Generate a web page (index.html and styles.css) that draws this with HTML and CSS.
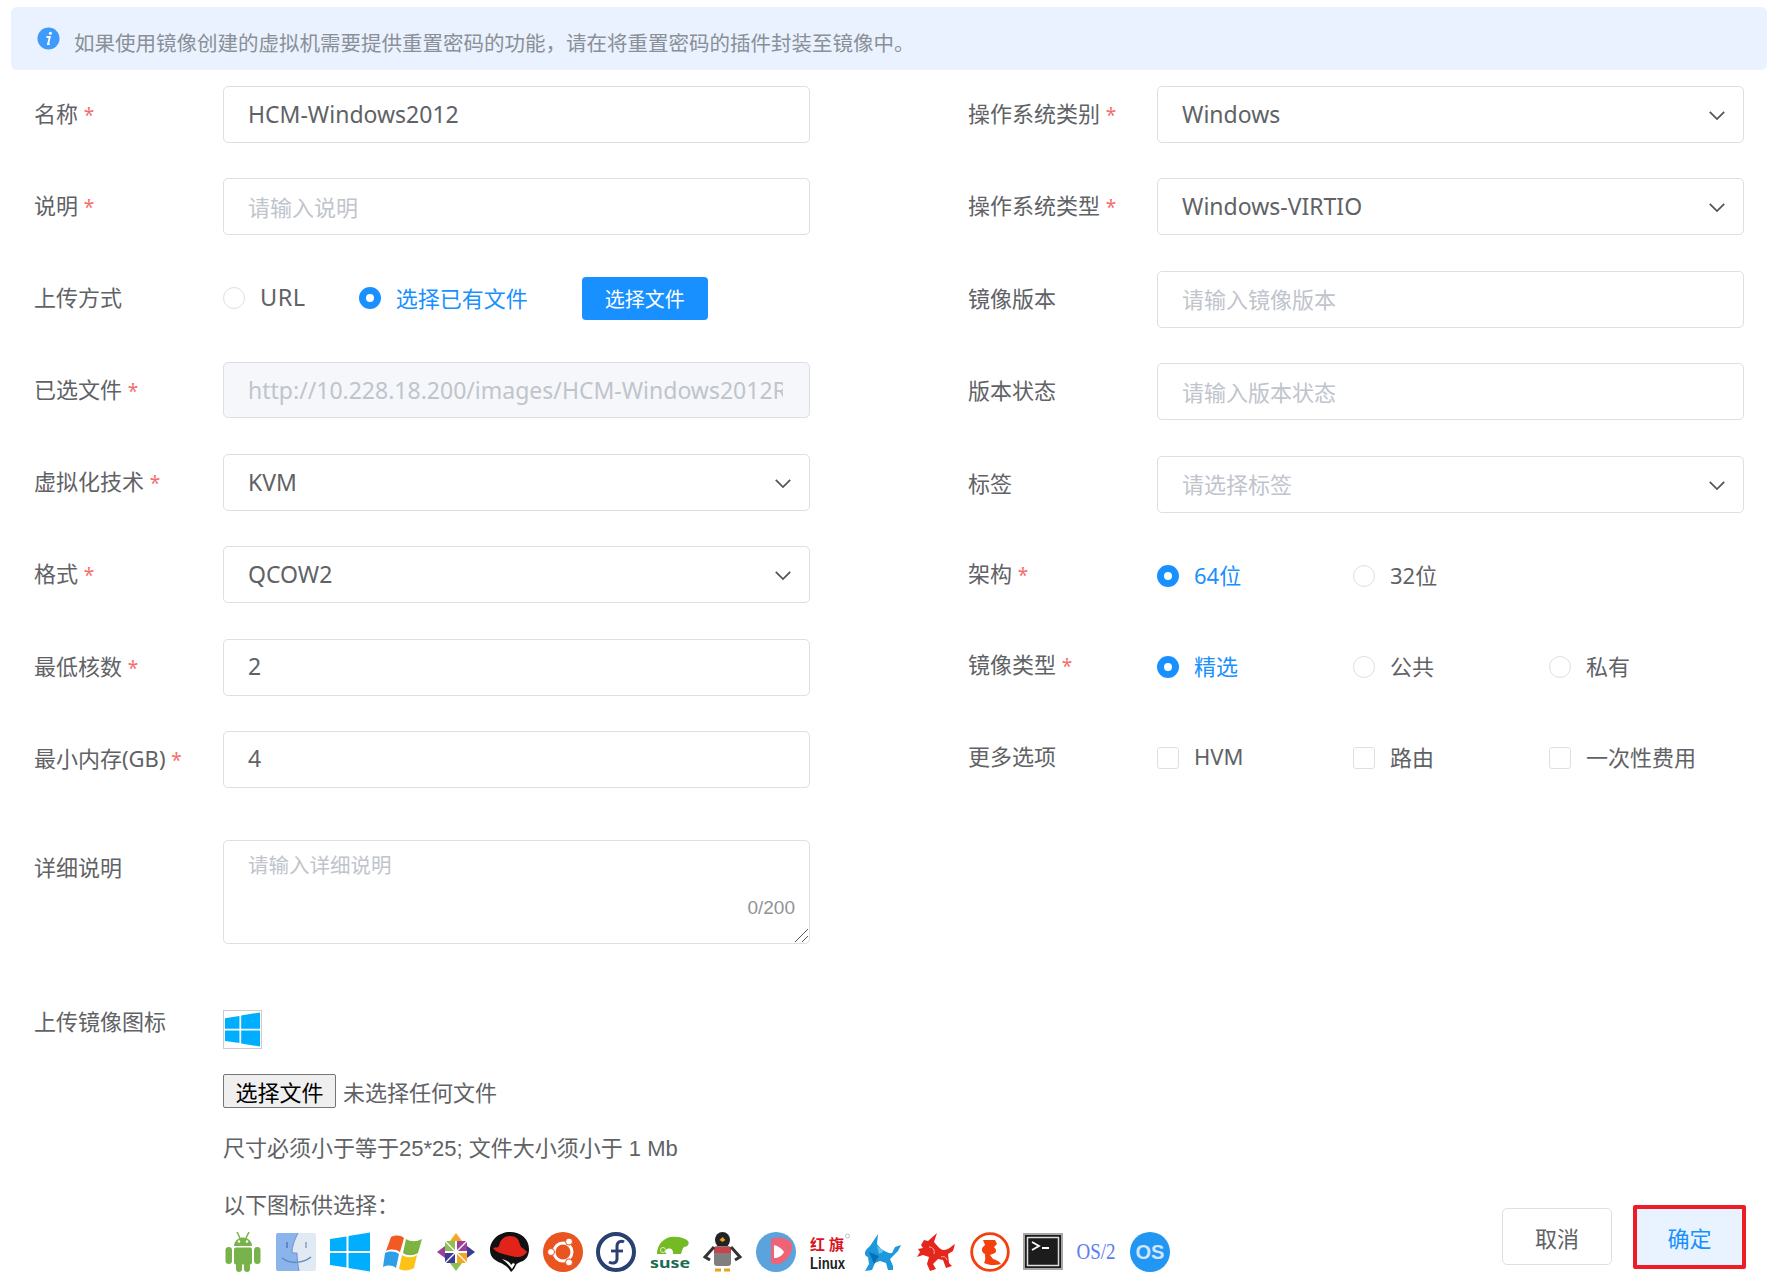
FILE: index.html
```html
<!DOCTYPE html>
<html lang="zh">
<head>
<meta charset="utf-8">
<title>镜像</title>
<link rel="stylesheet" href="styles.css">
</head>
<body>
<div class="alert">
  <svg class="alert-icon" viewBox="0 0 24 24"><circle cx="12" cy="12" r="11.500" fill="#3f9bfb"/><circle cx="14" cy="6.600" r="1.600" fill="#fff"/><path d="M9.800 10.400h3.600l-1.900 7.400h1.800" fill="none" stroke="#fff" stroke-width="1.900"/></svg>
  <span>如果使用镜像创建的虚拟机需要提供重置密码的功能，请在将重置密码的插件封装至镜像中。</span>
</div>
<form class="form">
  <div class="columns">
    <div class="col col-left">
      <div class="row"><label class="lab">名称 <i>*</i></label><div class="box">HCM-Windows2012</div></div>
      <div class="row"><label class="lab">说明 <i>*</i></label><div class="box ph">请输入说明</div></div>
      <div class="row"><label class="lab">上传方式</label>
        <div class="upload-way">
          <span class="radio"></span><span class="opt url">URL</span>
          <span class="radio on"></span><span class="opt blue">选择已有文件</span>
          <span class="btn-blue">选择文件</span>
        </div>
      </div>
      <div class="row"><label class="lab">已选文件 <i>*</i></label><div class="box disabled"><span class="clip">http://10.228.18.200/images/HCM-Windows2012R2.qcow2</span></div></div>
      <div class="row"><label class="lab">虚拟化技术 <i>*</i></label><div class="box select">KVM<svg class="chev" viewBox="0 0 20 12"><path d="M2 2l8 8 8-8" fill="none" stroke="#555" stroke-width="2"/></svg></div></div>
      <div class="row"><label class="lab">格式 <i>*</i></label><div class="box select">QCOW2<svg class="chev" viewBox="0 0 20 12"><path d="M2 2l8 8 8-8" fill="none" stroke="#555" stroke-width="2"/></svg></div></div>
      <div class="row"><label class="lab">最低核数 <i>*</i></label><div class="box">2</div></div>
      <div class="row"><label class="lab">最小内存(GB) <i>*</i></label><div class="box">4</div></div>
      <div class="row row-area"><label class="lab">详细说明</label>
        <div class="area"><span class="area-ph">请输入详细说明</span><span class="count">0/200</span>
          <svg class="grip" viewBox="0 0 14 14"><path d="M1 14L14 1M8 14l6-6" stroke="#555" stroke-width="1" fill="none"/></svg>
        </div>
      </div>
    </div>
    <div class="col col-right">
      <div class="row"><label class="lab">操作系统类别 <i>*</i></label><div class="box select">Windows<svg class="chev" viewBox="0 0 20 12"><path d="M2 2l8 8 8-8" fill="none" stroke="#555" stroke-width="2"/></svg></div></div>
      <div class="row"><label class="lab">操作系统类型 <i>*</i></label><div class="box select">Windows-VIRTIO<svg class="chev" viewBox="0 0 20 12"><path d="M2 2l8 8 8-8" fill="none" stroke="#555" stroke-width="2"/></svg></div></div>
      <div class="row"><label class="lab">镜像版本</label><div class="box ph">请输入镜像版本</div></div>
      <div class="row"><label class="lab">版本状态</label><div class="box ph">请输入版本状态</div></div>
      <div class="row row-last"><label class="lab">标签</label><div class="box select ph">请选择标签<svg class="chev" viewBox="0 0 20 12"><path d="M2 2l8 8 8-8" fill="none" stroke="#555" stroke-width="2"/></svg></div></div>
      <div class="row row-opt"><label class="lab">架构 <i>*</i></label>
        <div class="opts"><div class="item"><span class="radio on"></span><span class="opt blue">64位</span></div><div class="item"><span class="radio"></span><span class="opt">32位</span></div></div></div>
      <div class="row row-opt"><label class="lab">镜像类型 <i>*</i></label>
        <div class="opts"><div class="item"><span class="radio on"></span><span class="opt blue">精选</span></div><div class="item"><span class="radio"></span><span class="opt">公共</span></div><div class="item"><span class="radio"></span><span class="opt">私有</span></div></div></div>
      <div class="row row-opt"><label class="lab">更多选项</label>
        <div class="opts"><div class="item"><span class="check"></span><span class="opt">HVM</span></div><div class="item"><span class="check"></span><span class="opt">路由</span></div><div class="item"><span class="check"></span><span class="opt">一次性费用</span></div></div></div>
    </div>
  </div>
  <div class="up-row">
    <label class="lab">上传镜像图标</label>
    <div class="up-body">
      <div class="preview"><svg viewBox="0 0 40 40"><use href="#win"/></svg></div>
      <div class="file"><span class="file-btn">选择文件</span><span class="file-name">未选择任何文件</span></div>
      <p class="hint">尺寸必须小于等于25*25; 文件大小须小于 1 Mb</p>
      <p class="hint hint2">以下图标供选择：</p>
    </div>
  </div>
  <div class="bottom">
    <div class="icons">
      <svg class="ic" viewBox="0 0 40 40"><g fill="#78b24a"><path d="M11 14a9 8.500 0 0 1 18 0z"/><rect x="11" y="15.500" width="18" height="17" rx="2"/><rect x="2.500" y="15" width="6.500" height="17" rx="3.200"/><rect x="31" y="15" width="6.500" height="17" rx="3.200"/><rect x="13" y="30" width="6" height="10" rx="3"/><rect x="21" y="30" width="6" height="10" rx="3"/></g><path d="M14 0l3 6M26 0l-3 6" stroke="#78b24a" stroke-width="1.500"/><circle cx="16" cy="9.500" r="1.200" fill="#fff"/><circle cx="24" cy="9.500" r="1.200" fill="#fff"/></svg>
      <svg class="ic" viewBox="0 0 40 40"><rect x="0" y="1" width="40" height="38" rx="2" fill="#e1e9f2"/><path d="M2 1h20c-4 8-6 14-6 20h5c0 6 1 12 2 18H2a2 2 0 0 1-2-2V3a2 2 0 0 1 2-2z" fill="#8bb4ec"/><rect x="10" y="10" width="2" height="6" fill="#5f86c4"/><rect x="29" y="10" width="2" height="6" fill="#9db2c9"/><path d="M6 26c8 6 20 6 29-1" stroke="#5f86c4" stroke-width="1.500" fill="none"/><path d="M22 1c-4 8-6 14-6 20h5c0 6 1 12 2 18" stroke="#6f94cc" stroke-width="1" fill="none"/></svg>
      <svg class="ic" viewBox="0 0 40 40"><use href="#win"/></svg>
      <svg class="ic" viewBox="0 0 40 40"><path d="M8 5c5-2 9-2 13 1l-4 14c-5-3-9-3-14-1z" fill="#f25a23"/><path d="M23 7c5 3 10 3 16 0l-4 14c-5 3-11 3-15 0z" fill="#7cb342"/><path d="M2 21c5-2 9-2 14 1l-3 14c-4-3-8-3-13-1z" fill="#2e9fe6"/><path d="M19 23c5 3 10 3 15 0l-3 13c-5 3-11 3-15 1z" fill="#fbc318"/></svg>
      <svg class="ic" viewBox="0 0 40 40"><path d="M20 1l6 8h-12z" fill="#f5a623"/><path d="M39 20l-8 6V14z" fill="#3c3a94"/><path d="M20 39l-6-8h12z" fill="#8cc152"/><path d="M1 20l8-6v12z" fill="#9b3f9d"/><rect x="9" y="9" width="10" height="10" fill="#8cc152"/><rect x="21" y="9" width="10" height="10" fill="#9b3f9d"/><rect x="9" y="21" width="10" height="10" fill="#3c3a94"/><rect x="21" y="21" width="10" height="10" fill="#f5a623"/><path d="M9 9l22 22M31 9L9 31" stroke="#fff" stroke-width="1.300"/></svg>
      <svg class="ic" viewBox="0 0 40 40"><path d="M20 0c11 0 19 7 19 17 0 7-3 10-6 12-3 1-6 2-7 4-1 2-2 5-5 7-2-4-6-7-10-9C5 29 0 25 0 18 0 8 9 0 20 0z" fill="#111"/><path d="M3 16c3-1 5 0 6-2 1-6 5-10 11-10 6 0 9 3 10 9 1 3 5 4 7 7-3 5-9 6-16 4-7-2-15-3-18-8z" fill="#e2231a"/><path d="M12 27c4 1 8 3 9 6l2-2 2 1-3 5c-3-4-6-7-10-10z" fill="#fff"/></svg>
      <svg class="ic" viewBox="0 0 40 40"><circle cx="20" cy="20" r="20" fill="#e95420"/><circle cx="20" cy="20" r="9" fill="none" stroke="#fff" stroke-width="3"/><circle cx="8" cy="20" r="3.500" fill="#fff" stroke="#e95420"/><circle cx="26" cy="9.600" r="3.500" fill="#fff" stroke="#e95420"/><circle cx="26" cy="30.400" r="3.500" fill="#fff" stroke="#e95420"/></svg>
      <svg class="ic" viewBox="0 0 40 40"><circle cx="20" cy="20" r="18" fill="#fff" stroke="#294172" stroke-width="4"/><path d="M28 10c-3-2-7 0-7 4v13c0 4-4 5-8 3" fill="none" stroke="#294172" stroke-width="3"/><path d="M15 19h12" stroke="#294172" stroke-width="2.800"/></svg>
      <svg class="ic" viewBox="0 0 40 40"><path d="M7 22c0-11 9-19 20-17 4 0 9 2 11 4 2 3-1 6-4 6-2 2-2 4-3 7H23c1-5-4-7-7-4-2 2 0 4 2 4z" fill="#73ba25"/><circle cx="13" cy="18" r="2.500" fill="none" stroke="#d9eec5"/><text class="suse" x="0" y="36" textLength="40" lengthAdjust="spacingAndGlyphs">suse</text></svg>
      <svg class="ic" viewBox="0 0 40 40"><ellipse cx="19.500" cy="8" rx="7.500" ry="8" fill="#222"/><path d="M19.500 5l3 3-3 2-3-2z" fill="#e8a21b"/><rect x="11" y="14" width="17" height="20" rx="3" fill="#7f7f7f"/><rect x="11" y="15" width="17" height="6" fill="#c8434a"/><path d="M11 15L2 25l5 3M28 15l9 10-5 3" stroke="#333" stroke-width="3" fill="none"/><path d="M12 38h6M21 38h6" stroke="#e8a21b" stroke-width="3"/></svg>
      <svg class="ic" viewBox="0 0 40 40"><circle cx="20" cy="20" r="20" fill="#5aa3dc"/><path d="M15 7c9-3 18-1 21 5 1 9-5 18-14 20-2 0-5 0-7-1z" fill="#ef6376"/><path d="M18 13c5 1 9 5 10 7-2 4-6 6-10 6z" fill="#fff"/></svg>
      <svg class="ic" viewBox="0 0 40 40"><text class="hq" x="0" y="18">红旗</text><circle cx="37.500" cy="4" r="2" fill="none" stroke="#999" stroke-width=".6"/><text class="lin" x="0" y="37" textLength="35" lengthAdjust="spacingAndGlyphs">Linux</text></svg>
      <svg class="ic" viewBox="0 0 40 40"><path d="M2 21c0-3 3-5 5-7l8-12-1 10c1 2 3 3 4 5 3 1 7 5 11 4l3-6 6-2-3 6-3 3-5 5 3 7 0 4-5 0-2-7-6-2-5 2-3 7-7 1 4-7-1-7c-2-1-3-1-3-4z" fill="#1d98dc"/><path d="M6 20l10 4-5 8z" fill="#0b6fb5"/><path d="M14 14l7 5-5 3z" fill="#66c3ef"/></svg>
      <svg class="ic" viewBox="0 0 40 40"><path d="M5 13l3-5 4 1 9-8-3 9c3 3 5 7 9 8 4 0 7-2 9-4l3-2-2 7-5 3 1 9 3 3-6 2-3-8-5-1-5 5 3 5-6 2-3-7 2-7-6-2-6 2 3-5-2-3 5-1z" fill="#e5261c"/><path d="M13 15c4 0 6 3 5 7M25 25c3-1 5 0 6 3" stroke="#f9b3a0" fill="none"/></svg>
      <svg class="ic" viewBox="0 0 40 40"><circle cx="20" cy="20" r="18.300" fill="#fff" stroke="#f43f0e" stroke-width="2.800"/><path d="M13 8h12l2 4-3 3c2 2 3 4 1 6l-5 2 3 4c3 1 6 2 8 5-6 2-13 1-17-1 2-3 1-6 1-9-3-1-4-5-2-7l2-2z" fill="#f43f0e"/></svg>
      <svg class="ic" viewBox="0 0 40 40"><rect x="0" y="1" width="40" height="37" fill="#a7a7a7"/><rect x="2" y="3" width="36" height="33" fill="#1c1c1c"/><rect x="4.500" y="5.500" width="31" height="28" fill="none" stroke="#ddd" stroke-width="1.500"/><path d="M9 10l7 4-7 4" fill="none" stroke="#fff" stroke-width="1.800"/><path d="M19 16h7" stroke="#fff" stroke-width="2"/></svg>
      <svg class="ic ic-open" viewBox="0 0 40 40"><text class="os2" x="0.500" y="27" textLength="39" lengthAdjust="spacingAndGlyphs">OS/2</text></svg>
      <svg class="ic" viewBox="0 0 40 40"><circle cx="20" cy="20" r="20" fill="#2196f3"/><text class="os" x="20" y="27" text-anchor="middle">OS</text></svg>
    </div>
    <div class="actions">
      <span class="btn">取消</span>
      <span class="btn ok">确定</span>
    </div>
  </div>
</form>
<svg class="defs" width="0" height="0"><defs><symbol id="win" viewBox="0 0 40 40"><path d="M0 7l16.500-2.500V19H0zM18.500 4L40 0.500V19H18.500zM0 21h16.500v14.500L0 33zM18.500 21H40v18.500L18.500 36z" fill="#00aeff"/></symbol></defs></svg>
</body>
</html>
```
FILE: styles.css
```css
* { box-sizing: border-box; }
html, body { margin: 0; padding: 0; }
body {
  width: 1782px; height: 1285px; overflow: hidden; background: #fff;
  font-family: "Noto Sans", "Noto Sans CJK SC", sans-serif;
  font-size: 22px; color: #606266; padding-top: 7px;
}
.alert {
  margin: 0 15px 0 11px; height: 63px; background: #e9f2fe; border-radius: 6px;
  display: flex; align-items: center; padding-left: 26px; font-size: 20.500px; color: #8a8f98;
}
.alert-icon { width: 23px; height: 23px; margin-right: 14px; }
.alert span { padding-top: 6px; }
.form { padding: 16px 38px 0 34px; }
.columns { display: flex; justify-content: space-between; }
.col { width: 776px; }
.row { display: flex; height: 57px; margin-bottom: 35.100px; align-items: flex-start; }
.col-right .row { margin-bottom: 35.400px; }
.col-right .row-last { margin-bottom: 50.500px; }
.lab { width: 189px; flex: none; line-height: 54px; white-space: nowrap; color: #606266; }
.lab i { color: #f56c6c; font-style: normal; font-size: 19px; }
.box {
  flex: 1; height: 57px; border: 1px solid #dcdfe6; border-radius: 5px; padding: 0 24px 2px;
  display: flex; align-items: center; position: relative; font-size: 23px; white-space: nowrap; overflow: hidden;
}
.ph { color: #c0c4cc; font-size: 22px; }
.disabled { background: #f5f7fa; color: #c0c4cc; height: 56px; padding-bottom: 0; }
.clip { display: block; width: 535px; overflow: hidden; }
.select { padding-right: 50px; }
.chev { position: absolute; right: 17px; top: 23px; width: 18px; height: 11px; }
.upload-way { display: flex; align-items: center; height: 57px; }
.radio { width: 22px; height: 22px; border: 1px solid #dcdfe6; border-radius: 50%; flex: none; background: #fff; }
.radio.on { border: 7px solid #1890ff; }
.opt { margin-left: 15px; }
.upload-way .radio { margin-bottom: 2px; }
.upload-way .opt { margin-right: 54px; padding-bottom: 4px; }
.upload-way .url { margin-right: 53px; font-size: 23.500px; letter-spacing: .5px; }
.blue { color: #1890ff; }
.btn-blue {
  background: #1890ff; color: #fff; border-radius: 4px; height: 43px; width: 126px;
  display: flex; align-items: center; justify-content: center; font-size: 20px;
}
.col-right .row-opt { height: 22px; margin-bottom: 69px; align-items: center; }
.row-opt .lab { line-height: 22px; }
.row-opt .radio, .row-opt .check { margin-top: 3px; }
.opts { display: flex; }
.item { width: 196px; display: flex; align-items: center; }
.check { width: 22px; height: 22px; border: 1px solid #dcdfe6; border-radius: 3px; flex: none; }
.row-area { height: 104px; margin-top: 52px; margin-bottom: 0; }
.row-area .lab { line-height: 54px; }
.area {
  flex: 1; height: 104px; border: 1px solid #dcdfe6; border-radius: 5px; position: relative; padding: 8px 24px;
  color: #c0c4cc; font-size: 20.500px;
}
.area-ph { display: block; }
.count { position: absolute; right: 14px; bottom: 24px; font: 19px "Liberation Sans", sans-serif; color: #909399; }
.grip { position: absolute; right: 1px; bottom: 1px; width: 14px; height: 14px; }
.up-row { display: flex; margin-top: 66px; }
.up-row .lab { line-height: 23px; }
.up-body { flex: 1; }
.preview { width: 39px; height: 39px; border: 1px solid #ccc; display: flex; padding: 1px; }
.preview svg { width: 100%; height: 100%; }
.file { display: flex; align-items: center; margin-top: 25px; height: 34px; }
.file-btn {
  width: 113px; height: 34px; border: 1px solid #767676; border-radius: 2px; background: #efefef; color: #000;
  display: flex; align-items: center; justify-content: center;
}
.file-name { margin-left: 7px; }
.hint { margin: 0; margin-top: 28px; line-height: 26px; font-family: "Liberation Sans", "Noto Sans CJK SC", sans-serif; }
.hint2 { margin-top: 31px; }
.bottom { display: flex; justify-content: space-between; align-items: flex-start; padding-left: 189px; margin-top: -14px; }
.icons { display: flex; gap: 13.330px; margin-top: 27px; }
.ic { width: 40px; height: 40px; flex: none; }
.ic-open { overflow: visible; }
.actions { display: flex; align-items: center; gap: 21px; margin-right: -2px; }
.btn {
  width: 110px; height: 57px; border: 1px solid #dcdfe6; border-radius: 5px; display: flex; align-items: center; justify-content: center;
}
.ok { width: 113px; height: 64px; border: 4px solid #ee1c25; background: #e8f3ff; color: #1890ff; border-radius: 2px; }
.defs { position: absolute; }
.suse { font: bold 15px "Noto Sans", sans-serif; fill: #1d6a55; }
.hq { font: bold 15px "Noto Sans CJK SC", sans-serif; fill: #d9141c; letter-spacing: 4px; }
.lin { font: bold 17px "Liberation Sans", sans-serif; fill: #222; }
.os2 { font: 23px "Liberation Serif", serif; fill: #5c7df0; }
.os { font: bold 20px "Liberation Sans", sans-serif; fill: #cfe6fb; }
```
